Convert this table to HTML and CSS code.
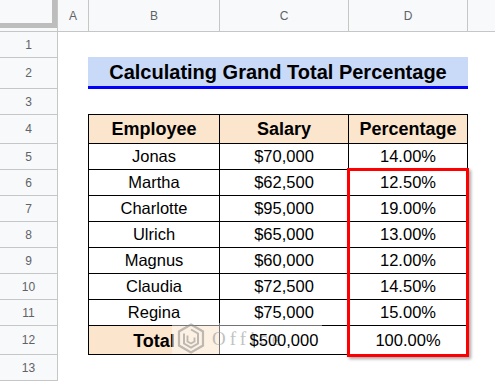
FILE: index.html
```html
<!DOCTYPE html>
<html>
<head>
<meta charset="utf-8">
<link rel="stylesheet" href="styles.css">
</head>
<body>
<div class="sheet">
  <div class="colhdr">
    <div class="corner"><div class="freeze"></div></div>
    <div class="ch ca">A</div>
    <div class="ch cb">B</div>
    <div class="ch cc">C</div>
    <div class="ch cd">D</div>
    <div class="ch ce"></div>
  </div>
  <div class="main">
    <div class="rowhdrs">
      <div class="rh r26">1</div>
      <div class="rh r31">2</div>
      <div class="rh r26">3</div>
      <div class="rh r29">4</div>
      <div class="rh r26">5</div>
      <div class="rh r26">6</div>
      <div class="rh r26">7</div>
      <div class="rh r26">8</div>
      <div class="rh r26">9</div>
      <div class="rh r26">10</div>
      <div class="rh r26">11</div>
      <div class="rh r29">12</div>
      <div class="rh r26">13</div>
    </div>
    <div class="content">
      <div class="title">Calculating Grand Total Percentage</div>
      <div class="tbl">
        <div class="cell head">Employee</div>
        <div class="cell head">Salary</div>
        <div class="cell head">Percentage</div>

        <div class="cell">Jonas</div><div class="cell">$70,000</div><div class="cell">14.00%</div>
        <div class="cell">Martha</div><div class="cell">$62,500</div><div class="cell">12.50%</div>
        <div class="cell">Charlotte</div><div class="cell">$95,000</div><div class="cell">19.00%</div>
        <div class="cell">Ulrich</div><div class="cell">$65,000</div><div class="cell">13.00%</div>
        <div class="cell">Magnus</div><div class="cell">$60,000</div><div class="cell">12.00%</div>
        <div class="cell">Claudia</div><div class="cell">$72,500</div><div class="cell">14.50%</div>
        <div class="cell">Regina</div><div class="cell">$75,000</div><div class="cell">15.00%</div>

        <div class="cell total">Total</div><div class="cell"><span class="above">$500,000</span></div><div class="cell">100.00%</div>
      </div>
      <div class="highlight"></div>
      <div class="watermark">
        <svg class="logo" width="28" height="31" viewBox="0 0 28 31">
          <path d="M14 1.5 L26 8.5 L26 22.5 L14 29.5 L2 22.5 L2 8.5 Z" fill="none" stroke="#8a8a8a" stroke-width="2.2"/>
          <path d="M14 6.5 L21 10.5 L21 20.5 L14 24.5 L7 20.5 L7 10.5" fill="none" stroke="#8a8a8a" stroke-width="2"/>
          <path d="M10.5 12.5 L10.5 18.5 L14 20.5 L17.5 18.5 L17.5 14.5" fill="none" stroke="#8a8a8a" stroke-width="1.8"/>
        </svg>
        <span class="wmtext">Office</span>
      </div>
    </div>
  </div>
</div>
</body>
</html>
```

FILE: styles.css
```css
* { box-sizing: border-box; }
html, body { margin: 0; padding: 0; background: #fff; }
body { font-family: "Liberation Sans", Arial, sans-serif; width: 495px; height: 381px; overflow: hidden; }

.sheet { width: 495px; }

.colhdr { display: flex; height: 32px; border-bottom: 1px solid #c4c7c5; background: #f8f9fa; }
.corner { width: 58px; border-right: 1px solid #c4c7c5; }
.freeze { width: 57px; height: 28px; border-right: 5px solid #bdbdbd; border-bottom: 5px solid #bdbdbd; background: #f8f9fa; }
.ch { display: flex; align-items: center; justify-content: center; border-right: 1px solid #c4c7c5; font-size: 12px; color: #5f6368; }
.ca { width: 31px; }
.cb { width: 131px; }
.cc { width: 129px; }
.cd { width: 119px; }
.ce { flex: 1; border-right: none; }

.main { display: flex; }
.rowhdrs { width: 58px; display: flex; flex-direction: column; background: #f8f9fa; border-right: 1px solid #c4c7c5; }
.rh { display: flex; align-items: center; justify-content: center; border-bottom: 1px solid #c4c7c5; font-size: 12px; color: #5f6368; }
.r26 { height: 26px; }
.r29 { height: 29px; }
.r31 { height: 31px; }

.content { position: relative; flex: 1; padding-left: 30px; }

.title { margin-top: 25px; width: 380px; height: 32px; background: #c9daf8; border-bottom: 3px solid #0000ff; display: flex; align-items: center; justify-content: center; font-weight: bold; font-size: 20px; color: #000; padding-top: 1px; }

.tbl { margin-top: 25px; display: grid; grid-template-columns: 131px 129px 119px; grid-template-rows: 29px repeat(7, 26px) 29px; border-top: 1px solid #000; border-left: 1px solid #000; width: 380px; }
.cell { display: flex; align-items: center; justify-content: center; border-right: 1px solid #000; border-bottom: 1px solid #000; font-size: 16.5px; color: #000; }
.head { background: #fce5cd; font-weight: bold; font-size: 18px; }
.total { background: #fce5cd; font-weight: bold; font-size: 18px; padding-top: 2px; }
.above { position: relative; z-index: 2; }

.highlight { position: absolute; left: 289px; top: 136px; width: 122px; height: 189px; border: 3px solid #ff0000; box-shadow: 2px 2px 3px rgba(0,0,0,0.35); }

.watermark { position: absolute; z-index: 1; left: 114px; top: 291px; width: 150px; height: 31px; background: rgba(255,255,255,0.45); display: flex; align-items: center; overflow: hidden; }
.logo { margin-left: 5px; flex: none; opacity: 0.55; }
.wmtext { margin-left: 7px; font-family: "Liberation Serif", serif; font-size: 19px; letter-spacing: 4px; color: #999; opacity: 0.6; white-space: nowrap; }
```
